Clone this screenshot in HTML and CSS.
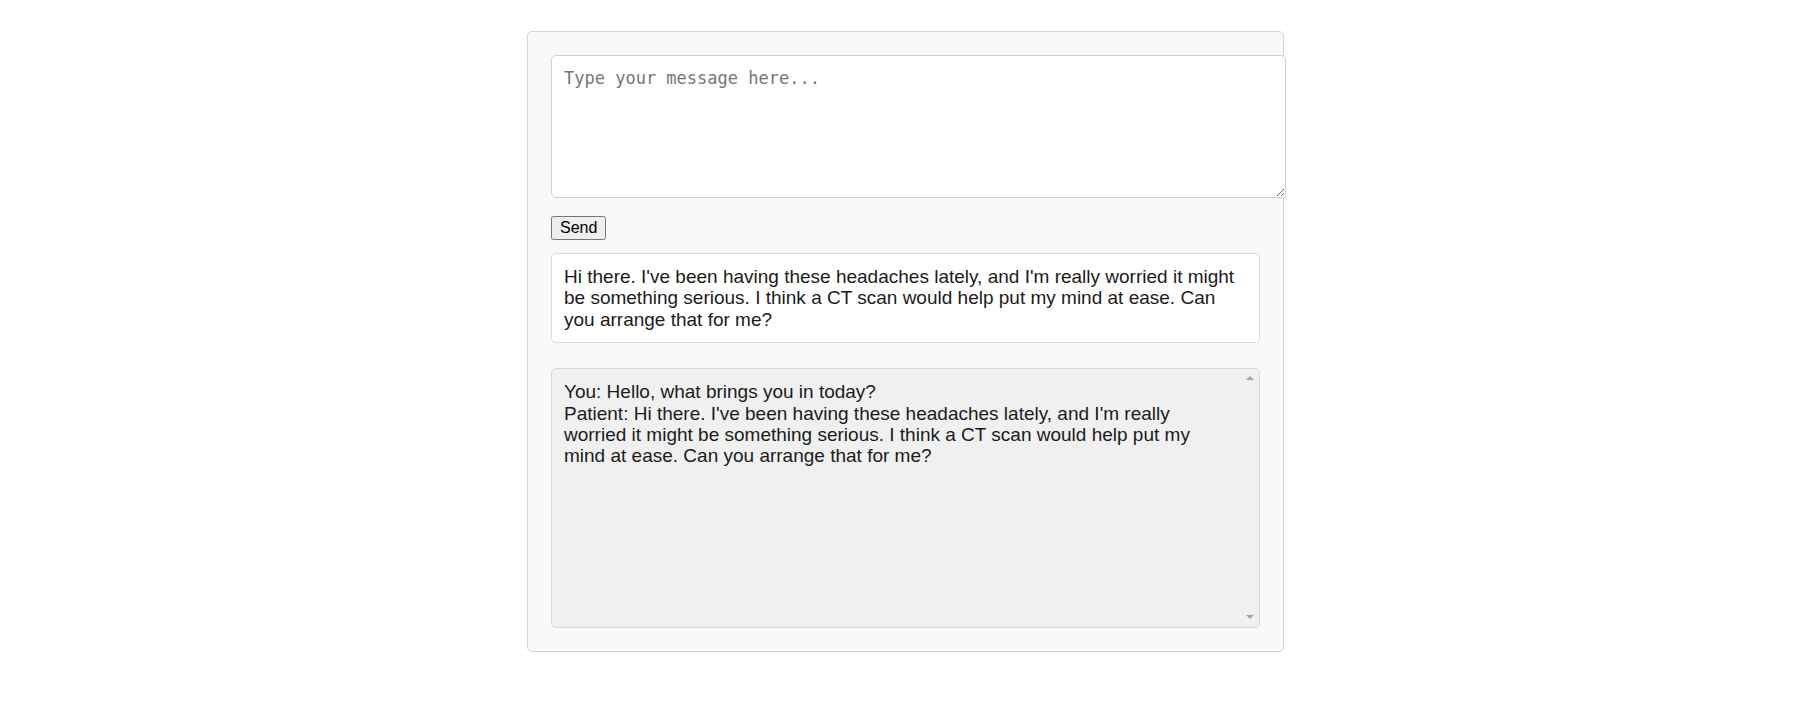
FILE: index.html
```html
<!DOCTYPE html>
<html lang="en">
<head>
<meta charset="utf-8">
<title>Chat</title>
<link rel="stylesheet" href="styles.css">
</head>
<body>
<div class="chat">
  <textarea class="input" placeholder="Type your message here..."></textarea>
  <button class="send" type="button">Send</button>
  <div class="reply">Hi there. I've been having these headaches lately, and I'm really worried it might be something serious. I think a CT scan would help put my mind at ease. Can you arrange that for me?</div>
  <div class="history">You: Hello, what brings you in today?<br>Patient: Hi there. I've been having these headaches lately, and I'm really worried it might be something serious. I think a CT scan would help put my mind at ease. Can you arrange that for me?</div>
</div>
</body>
</html>
```
FILE: styles.css
```css
html, body {
  margin: 0;
  padding: 0;
  background: #ffffff;
}

body {
  font-family: "Liberation Sans", Arial, sans-serif;
  color: #1b1b1b;
}

.chat {
  width: 709px;
  margin: 31px auto 0;
  padding: 23px;
  border: 1px solid #d4d4d4;
  border-radius: 5px;
  background: #f9f9f9;
}

.input {
  display: block;
  width: 100%;
  height: 117px;
  margin: 0;
  padding: 12px;
  border: 1px solid #cfcfcf;
  border-radius: 5px;
  background: #ffffff;
  font-family: "DejaVu Sans Mono", "Liberation Mono", monospace;
  font-size: 17px;
  color: #222;
}

.input::placeholder {
  color: #767676;
}

.send {
  display: block;
  margin: 18px 0 0;
  padding: 1px 7px;
  font-family: "Liberation Sans", Arial, sans-serif;
  font-size: 16px;
  color: #000;
}

.reply {
  box-sizing: border-box;
  margin-top: 13px;
  padding: 12px;
  border: 1px solid #dadada;
  border-radius: 5px;
  background: #ffffff;
  font-size: 19px;
  line-height: 21.4px;
}

.history {
  position: relative;
  box-sizing: border-box;
  height: 260px;
  margin-top: 25px;
  padding: 12px 29px 12px 12px;
  border: 1px solid #d8d8d8;
  border-radius: 5px;
  background: #f0f0f0;
  font-size: 19px;
  line-height: 21.4px;
  overflow: hidden;
}

/* scrollbar arrow buttons (the page is photographed with scrollbars hidden) */
.history::before,
.history::after {
  content: "";
  position: absolute;
  right: 5px;
  width: 0;
  height: 0;
  border-left: 4px solid transparent;
  border-right: 4px solid transparent;
}

.history::before {
  top: 7px;
  border-bottom: 4px solid #a3a3a3;
}

.history::after {
  bottom: 8px;
  border-top: 4px solid #a3a3a3;
}
```
